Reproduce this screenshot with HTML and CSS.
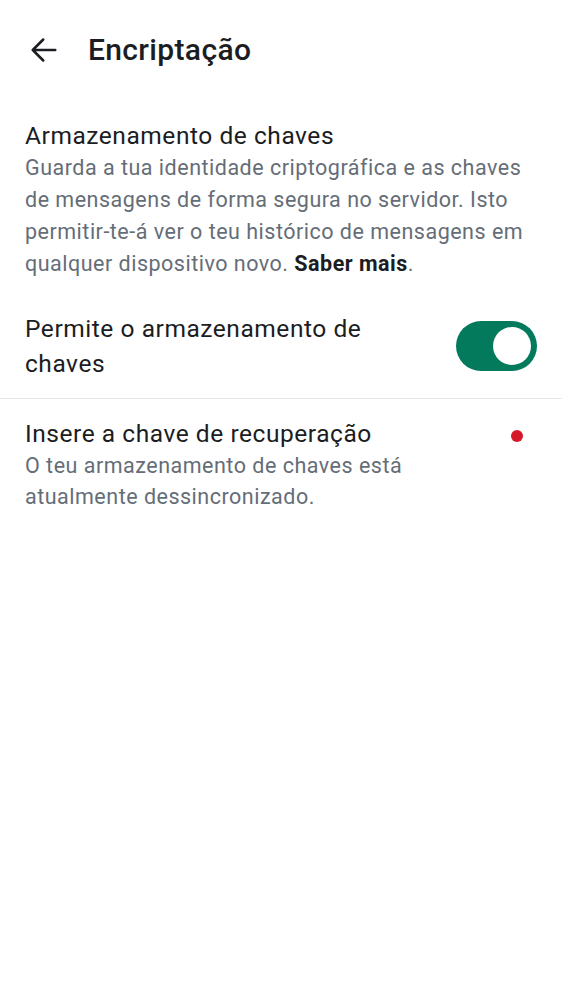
FILE: index.html
```html
<!DOCTYPE html>
<html lang="pt">
<head>
<meta charset="utf-8">
<link rel="stylesheet" href="styles.css">
</head>
<body>
<div class="app">
  <header class="topbar">
    <button class="back" aria-label="Voltar">
      <svg width="36" height="36" viewBox="0 0 24 24"><path d="M19.5 12H4.5M11.5 5l-7 7 7 7" fill="none" stroke="#1b1d22" stroke-width="1.7" stroke-linecap="round" stroke-linejoin="round"/></svg>
    </button>
    <h1 class="title">Encriptação</h1>
  </header>

  <section class="block">
    <div class="item-title">Armazenamento de chaves</div>
    <p class="item-desc">Guarda a tua identidade criptográfica e as chaves de mensagens de forma segura no servidor. Isto permitir-te-á ver o teu histórico de mensagens em qualquer dispositivo novo. <b class="link">Saber mais</b>.</p>
  </section>

  <div class="row toggle-row">
    <div class="item-title toggle-title">Permite o armazenamento de chaves</div>
    <div class="switch"><span class="knob"></span></div>
  </div>

  <div class="divider"></div>

  <div class="row recovery">
    <div class="texts">
      <div class="item-title">Insere a chave de recuperação</div>
      <p class="item-desc">O teu armazenamento de chaves está atualmente dessincronizado.</p>
    </div>
    <span class="dot"></span>
  </div>
</div>
</body>
</html>
```
FILE: styles.css
```css
* { box-sizing: border-box; }
html, body { margin: 0; padding: 0; background: #fff; }
body { font-family: Roboto, "Noto Sans", sans-serif; color: #1b1d22; }
.app { width: 562px; min-height: 1000px; }

.topbar { display: flex; align-items: center; height: 100px; padding-left: 26px; }
.back { border: 0; background: none; padding: 0; width: 36px; height: 36px; display: flex; }
.title { margin: 0 0 0 26px; font-size: 30px; line-height: 36px; font-weight: 500; letter-spacing: 0.35px; color: #1b1d22; }

.block { padding: 20px 25px 0 25px; }
.item-title { font-size: 24.5px; line-height: 32px; color: #1b1d22; letter-spacing: 0.55px; }
.item-desc { margin: 0; font-size: 21.5px; line-height: 32px; color: #656d77; letter-spacing: 0.5px; }
.link { color: #1b1d22; font-weight: 700; }

.row { display: flex; align-items: center; padding: 0 25px; }
.toggle-row { padding-top: 31px; padding-bottom: 17px; justify-content: space-between; }
.toggle-title { max-width: 390px; line-height: 35px; }
.switch { width: 81px; height: 50px; border-radius: 25px; background: #037a5c; position: relative; flex-shrink: 0; }
.knob { position: absolute; right: 6px; top: 6px; width: 38px; height: 38px; border-radius: 50%; background: #fff; }

.divider { height: 1px; background: #e7e8ea; }

.recovery { align-items: flex-start; padding-top: 19px; }
.texts { flex: 1; padding-right: 40px; }
.recovery .item-desc { line-height: 31px; }
.dot { width: 12px; height: 12px; border-radius: 50%; background: #d51928; margin-top: 12px; margin-right: 14px; }
```
